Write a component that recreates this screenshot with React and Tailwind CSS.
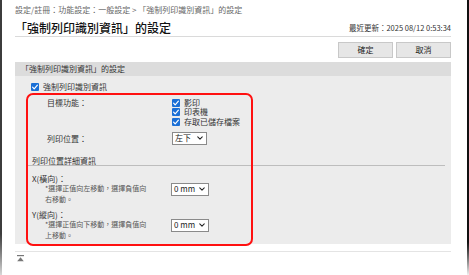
import React from 'react'

const font = { fontFamily: '"Noto Sans CJK TC", "Noto Sans", sans-serif' }

function Check() {
  return (
    <span className="inline-flex h-[8px] w-[8px] shrink-0 items-center justify-center rounded-[1px] bg-[#1a6fd6]">
      <svg viewBox="0 0 8 8" className="h-[8px] w-[8px]" fill="none">
        <path d="M1.6 4.2 3.2 5.8 6.4 2.2" stroke="#fff" strokeWidth="1.2" strokeLinecap="round" strokeLinejoin="round" />
      </svg>
    </span>
  )
}

function Select({ value, w }) {
  return (
    <div className={['flex h-[13px] items-center justify-between border border-[#8a8a8a] bg-white pl-[2px] pr-[3px] text-[8px] leading-none text-[#222]', w].join(' ')}>
      <span>{value}</span>
      <svg viewBox="0 0 8 5" className="h-[4px] w-[6px]" fill="none">
        <path d="M1 1l3 3 3-3" stroke="#222" strokeWidth="1.4" strokeLinecap="round" strokeLinejoin="round" />
      </svg>
    </div>
  )
}

export default function App() {
  return (
    <div className="relative flex h-[275px] w-[469px] overflow-hidden bg-white text-[#333]" style={font}>
      <div className="w-[2px] bg-linear-to-b from-[#3c3c3c] from-85% to-[#d8d8d8]" />

      <div className="flex-1 pl-[13px] pr-[16px]">
        <div className="mt-[4px] h-[12px] text-[8px] leading-[12px] text-[#666]">
          設定/註冊：功能設定：一般設定 &gt; 「強制列印識別資訊」的設定
        </div>

        <div className="mt-[4px] flex h-[17px] items-center justify-between border-b border-[#dadada]">
          <h1 className="text-[12px] font-medium leading-[16px] text-[#111]">「強制列印識別資訊」的設定</h1>
          <span className="text-[7.5px] leading-[16px] text-[#333]">最近更新：2025 08/12 0:53:34</span>
        </div>

        <div className="mt-[5px] flex justify-end gap-[3px]">
          <button type="button" className="h-[16px] w-[55px] border border-[#c8c8c8] bg-[#e6e6e6] text-[8px] leading-none text-[#222]">
            確定
          </button>
          <button type="button" className="h-[16px] w-[55px] border border-[#c8c8c8] bg-[#e6e6e6] text-[8px] leading-none text-[#222]">
            取消
          </button>
        </div>

        <div className="mt-[4px] h-[14px] bg-[#dcdcdc] pl-[6px] text-[8px] leading-[14px] text-[#333]">
          「強制列印識別資訊」的設定
        </div>

        <div className="bg-[#ececec] pb-[3px] pt-[6px]">
          <div className="flex h-[10px] items-center gap-[4px] pl-[16px] text-[8px]">
            <Check />
            <span>強制列印識別資訊</span>
          </div>

          <div className="mt-[6px] flex pl-[32px] text-[8px]">
            <div className="w-[125px] leading-[9.5px]">目標功能：</div>
            <div className="flex flex-col">
              {['影印', '印表機', '存取已儲存檔案'].map((t) => (
                <div key={t} className="flex h-[9.5px] items-center gap-[4px]">
                  <Check />
                  <span>{t}</span>
                </div>
              ))}
            </div>
          </div>

          <div className="mt-[4.5px] flex items-center pl-[32px] text-[8px]">
            <div className="w-[125px] pt-[2px]">列印位置：</div>
            <Select value="左下" w="w-[35px]" />
          </div>

          <div className="ml-[12px] mr-[6px] mt-[11px] h-[10px] border-b border-[#bdbdbd] pl-[5px] text-[8px] leading-[9px]">
            列印位置詳細資訊
          </div>

          <div className="pl-[17px] text-[8px]">
            <div className="mt-[7.5px] leading-[9px]">X(橫向)：</div>
            <div className="flex items-start">
              <div className="w-[139px] pl-[13px] text-[7px] leading-[11px] text-[#555]">
                *選擇正值向左移動，選擇負值向
                <br />
                右移動。
              </div>
              <Select value="0 mm" w="w-[38px]" />
            </div>

            <div className="mt-[5px] leading-[9px]">Y(縱向)：</div>
            <div className="flex items-start">
              <div className="w-[139px] pl-[13px] text-[7px] leading-[11px] text-[#555]">
                *選擇正值向下移動，選擇負值向
                <br />
                上移動。
              </div>
              <Select value="0 mm" w="w-[38px]" />
            </div>
          </div>
        </div>

        <div className="mt-[7px] border-t border-[#e4e4e4] pl-[2px] pt-[3px]">
          <svg viewBox="0 0 7 7" className="h-[7px] w-[7px]">
            <rect x="0" y="0" width="7" height="1.2" fill="#777" />
            <path d="M3.5 2.2 6.8 6.2H0.2Z" fill="#777" />
          </svg>
        </div>
      </div>

      <div className="w-[2px] bg-linear-to-b from-[#111] from-88% to-[#f0f0f0]" />

      <div className="pointer-events-none absolute left-[26px] top-[93px] h-[153px] w-[227px] rounded-[7px] border-2 border-[#ff1010]" />
    </div>
  )
}
